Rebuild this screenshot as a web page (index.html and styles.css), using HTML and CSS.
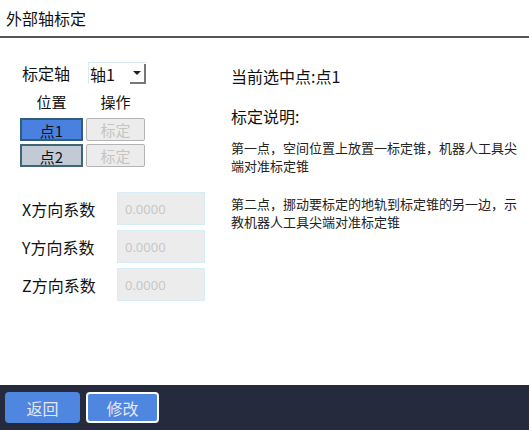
FILE: index.html
```html
<!DOCTYPE html>
<html lang="zh">
<head>
  <meta charset="UTF-8">
  <title>外部轴标定</title>
  <link rel="stylesheet" href="styles.css">
</head>
<body>

<div class="title-bar">外部轴标定</div>

<div class="main">
  <!-- 左侧：轴选择与点位 -->
  <div class="left-panel">
    <div class="axis-row">
      <span class="axis-label">标定轴</span>
      <div class="axis-select">
        <span>轴1</span>
        <span class="arrow-btn"><i class="arrow"></i></span>
      </div>
    </div>

    <div class="point-table">
      <div class="col-head">位置</div>
      <div class="col-head">操作</div>
      <button class="point-btn active">点1</button>
      <button class="calib-btn" disabled>标定</button>
      <button class="point-btn">点2</button>
      <button class="calib-btn" disabled>标定</button>
    </div>

    <div class="coef-list">
      <div class="coef-row">
        <span class="coef-label">X方向系数</span>
        <input class="coef-input" type="text" placeholder="0.0000" disabled>
      </div>
      <div class="coef-row">
        <span class="coef-label">Y方向系数</span>
        <input class="coef-input" type="text" placeholder="0.0000" disabled>
      </div>
      <div class="coef-row">
        <span class="coef-label">Z方向系数</span>
        <input class="coef-input" type="text" placeholder="0.0000" disabled>
      </div>
    </div>
  </div>

  <!-- 右侧：说明 -->
  <div class="right-panel">
    <div class="current-point">当前选中点:点1</div>
    <div class="desc-title">标定说明:</div>
    <p class="desc">第一点，空间位置上放置一标定锥，机器人工具尖端对准标定锥</p>
    <p class="desc">第二点，挪动要标定的地轨到标定锥的另一边，示教机器人工具尖端对准标定锥</p>
  </div>
</div>

<div class="footer">
  <button class="foot-btn">返回</button>
  <button class="foot-btn outlined">修改</button>
</div>

</body>
</html>
```

FILE: styles.css
```css
body {
  margin: 0;
  width: 529px;
  height: 430px;
  display: flex;
  flex-direction: column;
  font-family: "Noto Sans CJK SC", "Noto Sans", sans-serif;
  color: #111;
  background: #fff;
  overflow: hidden;
}
.title-bar {
  height: 36px;
  line-height: 36px;
  padding-left: 6px;
  font-size: 16px;
  border-bottom: 2px solid #555;
}
.main {
  flex: 1;
  display: flex;
}
.left-panel {
  width: 209px;
  padding-left: 20px;
}
.axis-row {
  display: flex;
  align-items: center;
  margin-top: 24px;
  height: 22px;
}
.axis-label {
  font-size: 16px;
  width: 66px;
  padding-left: 2px;
}
.axis-select {
  width: 56px;
  height: 21px;
  border: 1px solid #d8eaf5;
  border-right: none;
  border-bottom: none;
  display: flex;
  align-items: center;
  justify-content: space-between;
  font-size: 16px;
  padding-left: 1px;
}
.arrow-btn {
  width: 16px;
  height: 20px;
  display: flex;
  align-items: center;
  justify-content: center;
  border-right: 2px solid #777;
  border-bottom: 2px solid #777;
  box-sizing: border-box;
}
.arrow {
  border-left: 4px solid transparent;
  border-right: 4px solid transparent;
  border-top: 4px solid #222;
}
.point-table {
  display: grid;
  grid-template-columns: 63px 59px;
  column-gap: 3px;
  row-gap: 3px;
  margin-top: 7px;
}
.col-head {
  text-align: center;
  font-size: 15px;
  height: 22px;
  line-height: 22px;
  margin-bottom: 2px;
}
.point-btn {
  height: 23px;
  padding: 0;
  font-family: inherit;
  font-size: 15px;
  color: #111;
  background: #c2cad6;
  border: 2px solid #3e6673;
}
.point-btn.active {
  background: #4a80df;
  border-color: #2f5e78;
}
.calib-btn {
  height: 23px;
  padding: 0;
  font-family: inherit;
  font-size: 15px;
  color: #c4c4c4;
  background: #ececec;
  border: 1px solid #b4b4b4;
  border-radius: 2px;
}
.coef-list {
  display: flex;
  flex-direction: column;
  gap: 5px;
  margin-top: 25px;
}
.coef-row {
  display: flex;
  align-items: center;
}
.coef-label {
  width: 95px;
  font-size: 16px;
  padding-left: 2px;
}
.coef-input {
  width: 88px;
  height: 33px;
  box-sizing: border-box;
  padding: 0 7px;
  font-family: "Open Sans", "Noto Sans", sans-serif;
  font-size: 13px;
  background: #ececec;
  border: 1px solid #d6edf7;
  outline: none;
}
.coef-input::placeholder {
  color: #c6c6c6;
}
.right-panel {
  width: 292px;
  padding-left: 2px;
}
.current-point {
  font-size: 16px;
  margin-top: 27px;
  line-height: 22px;
}
.desc-title {
  font-size: 16px;
  margin-top: 18px;
  line-height: 22px;
}
.desc {
  font-size: 13px;
  line-height: 18px;
  margin: 12px 0 0;
  color: #222;
}
.desc + .desc {
  margin-top: 20px;
}
.footer {
  height: 45px;
  background: #252b3d;
  display: flex;
  align-items: center;
  gap: 6px;
  padding-left: 5px;
}
.foot-btn {
  width: 75px;
  height: 31px;
  font-family: inherit;
  font-size: 16px;
  color: #e6e6f4;
  background: #4f86df;
  border: none;
  border-radius: 4px;
}
.foot-btn.outlined {
  width: 73px;
  border: 2px solid #fff;
}
```
